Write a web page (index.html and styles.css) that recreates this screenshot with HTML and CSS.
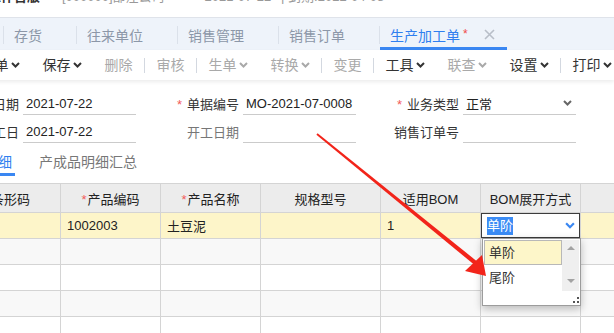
FILE: index.html
```html
<!DOCTYPE html>
<html lang="zh-CN">

<head>
    <meta charset="UTF-8">
    <title>生产加工单</title>
    <link rel="stylesheet" href="styles.css">
</head>

<body>
    <div class="page">
        <div class="topbar">
            <div class="topbar-line">
                <span class="top-title">工作台版</span>
                <span class="top-info">[000000]部注公司</span>
                <span class="top-info top-date">2021-07-22</span>
                <span class="top-info">| 到期:2022-04-08</span>
            </div>
        </div>

        <div class="tabs">
            <span class="tab-sep"></span>
            <div class="tab">存货</div>
            <span class="tab-sep"></span>
            <div class="tab">往来单位</div>
            <span class="tab-sep"></span>
            <div class="tab">销售管理</div>
            <span class="tab-sep"></span>
            <div class="tab">销售订单</div>
            <span class="tab-sep"></span>
            <div class="tab active">生产加工单<span class="dirty">*</span>
                <svg class="tab-close" viewBox="0 0 11 11"><path d="M1 1l9 9M10 1l-9 9" /></svg>
            </div>
        </div>

        <div class="toolbar">
            <div class="tool">新单<svg class="chev" viewBox="0 0 9 6"><path d="M1 1l3.5 3.5L8 1" /></svg></div>
            <div class="tool">保存<svg class="chev" viewBox="0 0 9 6"><path d="M1 1l3.5 3.5L8 1" /></svg></div>
            <div class="tool off">删除</div>
            <span class="tool-sep"></span>
            <div class="tool off">审核</div>
            <span class="tool-sep"></span>
            <div class="tool off">生单<svg class="chev" viewBox="0 0 9 6"><path d="M1 1l3.5 3.5L8 1" /></svg></div>
            <div class="tool off">转换<svg class="chev" viewBox="0 0 9 6"><path d="M1 1l3.5 3.5L8 1" /></svg></div>
            <span class="tool-sep"></span>
            <div class="tool off">变更</div>
            <span class="tool-sep"></span>
            <div class="tool">工具<svg class="chev" viewBox="0 0 9 6"><path d="M1 1l3.5 3.5L8 1" /></svg></div>
            <div class="tool off">联查<svg class="chev" viewBox="0 0 9 6"><path d="M1 1l3.5 3.5L8 1" /></svg></div>
            <div class="tool">设置<svg class="chev" viewBox="0 0 9 6"><path d="M1 1l3.5 3.5L8 1" /></svg></div>
            <span class="tool-sep"></span>
            <div class="tool">打印<svg class="chev" viewBox="0 0 9 6"><path d="M1 1l3.5 3.5L8 1" /></svg></div>
        </div>

        <div class="form">
            <div class="field">
                <label class="field-label">单据日期</label>
                <div class="field-input">2021-07-22</div>
            </div>
            <div class="field">
                <label class="field-label"><span class="req">*</span>单据编号</label>
                <div class="field-input">MO-2021-07-0008</div>
            </div>
            <div class="field">
                <label class="field-label"><span class="req">*</span>业务类型</label>
                <div class="field-input select">正常<svg class="chev" viewBox="0 0 9 6"><path d="M1 1l3.5 3.5L8 1" /></svg></div>
            </div>
            <div class="field">
                <label class="field-label">完工日</label>
                <div class="field-input">2021-07-22</div>
            </div>
            <div class="field">
                <label class="field-label muted">开工日期</label>
                <div class="field-input"></div>
            </div>
            <div class="field">
                <label class="field-label">销售订单号</label>
                <div class="field-input"></div>
            </div>
        </div>

        <div class="subtabs">
            <div class="subtab active">明细</div>
            <div class="subtab">产成品明细汇总</div>
        </div>

        <table class="grid">
            <colgroup>
                <col class="c100">
                <col class="c100">
                <col class="c100">
                <col class="c120">
                <col class="c100">
                <col class="c100">
                <col class="c100">
            </colgroup>
            <thead>
                <tr>
                    <th>条形码</th>
                    <th><span class="req">*</span>产品编码</th>
                    <th><span class="req">*</span>产品名称</th>
                    <th>规格型号</th>
                    <th>适用BOM</th>
                    <th>BOM展开方式</th>
                    <th>工序</th>
                </tr>
            </thead>
            <tbody>
                <tr class="current">
                    <td></td>
                    <td>1002003</td>
                    <td>土豆泥</td>
                    <td></td>
                    <td>1</td>
                    <td class="edit-cell">
                        <div class="cell-select">
                            <span class="picked">单阶</span>
                            <svg class="chev blue" viewBox="0 0 9 6"><path d="M1 1l3.5 3.5L8 1" /></svg>
                        </div>
                        <div class="dropdown">
                            <div class="dropdown-body">
                                <div class="options">
                                    <div class="option hover">单阶</div>
                                    <div class="option">尾阶</div>
                                </div>
                                <div class="scrollbar">
                                    <span class="tri up"></span>
                                    <span class="tri down"></span>
                                </div>
                            </div>
                            <svg class="grip" viewBox="0 0 6 6">
                                <rect x="4" y="0" width="2" height="2" />
                                <rect x="0" y="4" width="2" height="2" />
                                <rect x="4" y="4" width="2" height="2" />
                            </svg>
                        </div>
                    </td>
                    <td></td>
                </tr>
                <tr class="alt"><td></td><td></td><td></td><td></td><td></td><td></td><td></td></tr>
                <tr><td></td><td></td><td></td><td></td><td></td><td></td><td></td></tr>
                <tr class="alt"><td></td><td></td><td></td><td></td><td></td><td></td><td></td></tr>
                <tr><td></td><td></td><td></td><td></td><td></td><td></td><td></td></tr>
            </tbody>
        </table>

        <!-- 标注箭头 -->
        <svg class="arrow" viewBox="0 0 614 333">
            <polygon points="316.4,134.7 317.6,133.3 479.3,263.2 476.7,266.8" />
            <polygon points="486,276 465,271 482,255" />
        </svg>
    </div>
</body>

</html>
```

FILE: styles.css
```css
* {
    margin: 0;
    padding: 0;
    box-sizing: border-box;
}

body {
    font-family: "Liberation Sans", "Noto Sans CJK SC", sans-serif;
    font-size: 13px;
    color: #333;
    background: #fff;
}

.page {
    position: relative;
    width: 614px;
    height: 333px;
    overflow: hidden;
}

/* 顶部信息条 */
.topbar {
    height: 18px;
    border-bottom: 1px solid #dfe3ea;
    overflow: hidden;
}

.topbar-line {
    display: flex;
    align-items: center;
    height: 16px;
    line-height: 16px;
    margin-top: -11px;
    margin-left: -12px;
    white-space: nowrap;
}

.top-title {
    font-weight: 700;
    color: #333;
    width: 74px;
}

.top-info {
    color: #999;
    margin-right: 40px;
}

.top-date {
    margin-right: 10px;
}

/* 页签 */
.tabs {
    display: flex;
    align-items: center;
    height: 32px;
    background: #eef3fa;
    white-space: nowrap;
}

.tab-sep {
    flex-shrink: 0;
    width: 1px;
    height: 18px;
    background: #dbe1ea;
    margin-top: 2px;
}

.tab-sep:first-child {
    margin-left: 3px;
}

.tab {
    display: flex;
    align-items: center;
    height: 32px;
    padding: 4px 34px 0 10px;
    border-bottom: 3px solid transparent;
    font-size: 14px;
    color: #8c97a8;
}

.tab.active {
    color: #2f7fef;
    border-bottom-color: #3a87f2;
    padding-right: 12px;
}

.dirty {
    color: #f04848;
    font-size: 12px;
    margin: -2px 0 0 3px;
}

.tab-close {
    width: 11px;
    height: 11px;
    margin-left: 16px;
    fill: none;
    stroke: #b8bec8;
    stroke-width: 1.6;
}

/* 工具栏 */
.toolbar {
    position: relative;
    z-index: 1;
    display: flex;
    align-items: center;
    height: 30px;
    margin-left: -31px;
    background: #fff;
    box-shadow: 0 2px 4px rgba(0, 0, 0, 0.08);
    white-space: nowrap;
}

.tool {
    flex-shrink: 0;
    display: flex;
    align-items: center;
    padding: 0 11.5px;
    font-size: 14px;
    line-height: 20px;
    color: #333;
}

.tool.off {
    color: #a9a9a9;
}

.tool-sep {
    flex-shrink: 0;
    width: 1px;
    height: 15px;
    background: #d3d8e0;
}

.chev {
    flex-shrink: 0;
    width: 9px;
    height: 6px;
    margin-left: 2px;
    fill: none;
    stroke: currentColor;
    stroke-width: 2;
}

.chev.blue {
    color: #3a87f2;
}

/* 表头表单 */
.form {
    display: grid;
    grid-template-columns: repeat(3, 220px);
    row-gap: 5px;
    margin-left: -81px;
    padding-top: 12px;
}

.field {
    display: flex;
    align-items: center;
    height: 23px;
}

.field-label {
    width: 100px;
    margin-right: 4px;
    text-align: right;
    color: #333;
    white-space: nowrap;
}

.field-label.muted {
    color: #777;
}

.req {
    color: #f25a5a;
    margin-right: 5px;
}

.field-input {
    display: flex;
    align-items: center;
    justify-content: space-between;
    width: 113px;
    height: 23px;
    padding: 0 3px;
    border-bottom: 1px solid #cbcbcb;
    color: #222;
}

.field-input.select .chev {
    color: #666;
    margin-right: 1px;
}

/* 明细页签 */
.subtabs {
    display: flex;
    gap: 21px;
    height: 28px;
    margin: 5px 0 7px -19px;
}

.subtab {
    display: flex;
    align-items: center;
    padding: 0 3px;
    border-bottom: 3px solid transparent;
    font-size: 14px;
    color: #777;
}

.subtab.active {
    color: #2f7fef;
    border-bottom-color: #3a87f2;
}

/* 表格 */
.grid {
    border-collapse: collapse;
    table-layout: fixed;
    width: 720px;
    margin-left: -40px;
}

.c100 {
    width: 100px;
}

.c120 {
    width: 120px;
}

.grid th {
    height: 29px;
    background: #ececec;
    border: 1px solid #d4d4d4;
    font-weight: 400;
    color: #222;
    text-align: center;
    white-space: nowrap;
}

.grid th .req {
    margin-right: 1px;
}

.grid td {
    height: 26px;
    padding: 0 6px;
    border: 1px solid #d4d4d4;
    color: #222;
    white-space: nowrap;
}

.grid tr.current td {
    background: #fdf5c9;
}

.grid tr.alt td {
    background: #f8f8f8;
}

.grid td.edit-cell {
    position: relative;
    padding: 0;
}

.cell-select {
    display: flex;
    align-items: center;
    justify-content: space-between;
    height: 25px;
    padding: 0 4px 0 5px;
    border: 1px solid #3c3c3c;
    background: #fff;
}

.picked {
    background: #3b8cf5;
    color: #fff;
    line-height: 18px;
}

.cell-select .chev {
    width: 10px;
    height: 7px;
}

/* 下拉列表 */
.dropdown {
    position: absolute;
    top: 100%;
    left: 1px;
    z-index: 2;
    width: 99px;
    height: 68px;
    padding: 1px;
    background: #fff;
    border: 1px solid #9c9c9c;
    box-shadow: 0 3px 8px rgba(0, 0, 0, 0.25);
}

.dropdown-body {
    display: flex;
}

.options {
    flex: 1;
}

.option {
    height: 25px;
    line-height: 23px;
    padding-left: 4px;
    border: 1px solid transparent;
    color: #333;
}

.option.hover {
    background: #fdf6c9;
    border-color: #b8b8b8;
}

.scrollbar {
    display: flex;
    flex-direction: column;
    justify-content: space-between;
    align-items: center;
    width: 17px;
    height: 51px;
    padding: 6px 0 8px;
    background: #efefef;
}

.tri {
    width: 0;
    height: 0;
    border-left: 4px solid transparent;
    border-right: 4px solid transparent;
}

.tri.up {
    border-bottom: 4px solid #a3a3a3;
}

.tri.down {
    border-top: 4px solid #a3a3a3;
}

.grip {
    display: block;
    width: 6px;
    height: 6px;
    margin: 6px 0 0 89px;
    fill: #555;
}

/* 红色箭头 */
.arrow {
    position: absolute;
    left: 0;
    top: 0;
    width: 614px;
    height: 333px;
    z-index: 5;
    pointer-events: none;
    fill: #f2241a;
}
```
